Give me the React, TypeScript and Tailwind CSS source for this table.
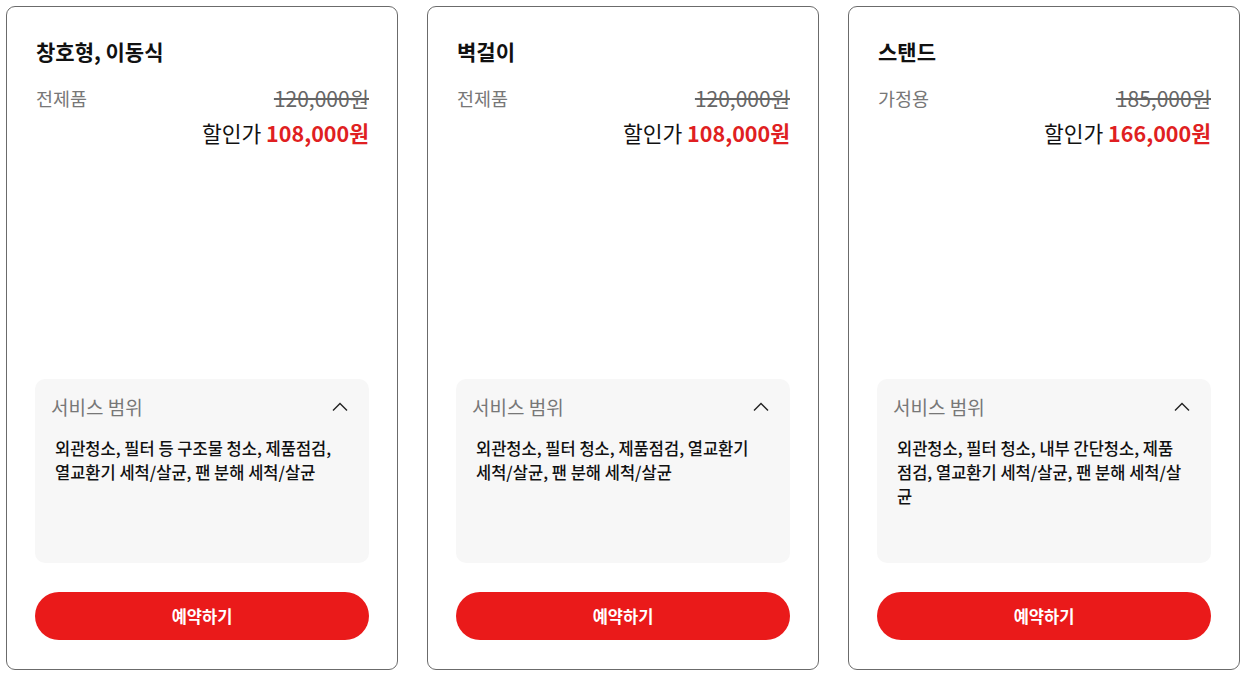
const products = [
  {
    id: 1,
    name: '창호형, 이동식',
    type: '전제품',
    price: '120,000원',
    sale: '108,000원',
    scope: '외관청소, 필터 등 구조물 청소, 제품점검, 열교환기 세척/살균, 팬 분해 세척/살균',
  },
  {
    id: 2,
    name: '벽걸이',
    type: '전제품',
    price: '120,000원',
    sale: '108,000원',
    scope: '외관청소, 필터 청소, 제품점검, 열교환기 세척/살균, 팬 분해 세척/살균',
  },
  {
    id: 3,
    name: '스탠드',
    type: '가정용',
    price: '185,000원',
    sale: '166,000원',
    scope: '외관청소, 필터 청소, 내부 간단청소, 제품점검, 열교환기 세척/살균, 팬 분해 세척/살균',
  },
];

const App = () => {
  return (
    <div
      className="flex gap-[29px] pl-[6px] pt-[6px] bg-white min-h-screen"
      style={{ fontFamily: '"Noto Sans CJK KR", "Noto Sans", sans-serif' }}
    >
      {products.map((p) => (
        <div
          key={p.id}
          className="w-[392px] shrink-0 h-[664px] flex flex-col border border-[#6b6b6b] rounded-[9px] px-[28px] pt-[28px] pb-[29px]"
        >
          {/* 상단 정보 */}
          <h2 className="pl-[1px] text-[21px] leading-[32px] font-bold text-[#111]">{p.name}</h2>
          <div className="flex items-center justify-between mt-[18px] pl-[1px] leading-[26px]">
            <span className="text-[18.5px] text-[#777]">{p.type}</span>
            <span className="text-[21px] text-[#666] line-through decoration-[#666]">{p.price}</span>
          </div>
          <div className="text-right mt-[8px] leading-[28px] text-[21.5px] text-[#111]">
            할인가 <span className="font-bold text-[#e01f22]">{p.sale}</span>
          </div>

          {/* 서비스 범위 */}
          <div className="mt-auto h-[184px] bg-[#f7f7f7] rounded-[10px] pl-[16px] pr-[21px] pt-[15px]">
            <div className="flex items-center justify-between">
              <span className="text-[19px] leading-[26px] text-[#777]">서비스 범위</span>
              <svg width="16" height="10" viewBox="0 0 16 10" fill="none">
                <polyline points="1,8.5 8,1.5 15,8.5" stroke="#222" strokeWidth="1.4" />
              </svg>
            </div>
            <p className="mt-[16px] pl-[4px] pr-[3px] text-[16.5px] leading-[24px] font-medium text-[#111]">
              {p.scope}
            </p>
          </div>

          <button className="mt-[29px] h-[48px] w-full rounded-full bg-[#ea1a1a] text-white text-[16.5px] font-bold">
            예약하기
          </button>
        </div>
      ))}
    </div>
  );
};

export default App;
